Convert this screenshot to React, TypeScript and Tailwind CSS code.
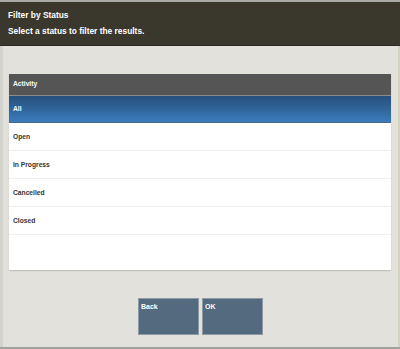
import React from "react";

const rows = ["Open", "In Progress", "Cancelled", "Closed"];

export default function App() {
  return (
    <div
      className="w-[400px] h-[349px] flex flex-col bg-[#e2e1dc] overflow-hidden relative"
      style={{ fontFamily: '"Liberation Sans", Arial, sans-serif' }}
    >
      <div className="h-[2px] bg-[#a9a9a6]" />
      <div className="h-[44px] bg-[#3a372c] border-b border-[#2c2a22] flex flex-col px-[8px] text-white font-bold text-[8.4px] leading-none">
        <div className="mt-[9px]">Filter by Status</div>
        <div className="mt-[8px]">Select a status to filter the results.</div>
      </div>
      <div className="flex-1 flex flex-col border-l-[3px] border-[#d3d2cd] border-r-[2px] border-r-[#d5d3bf]">
        <div className="mt-[28px] mx-[6px] mr-[7px] h-[196px] bg-white flex flex-col shadow-[0_1px_1px_rgba(0,0,0,0.15)] text-[6.7px] font-bold leading-none">
          <div className="h-[22px] shrink-0 bg-[#555555] border-b border-[#8a8a8a] flex items-center px-[4px] text-white">
            Activity
          </div>
          <div className="h-[27px] shrink-0 bg-gradient-to-b from-[#264f7a] to-[#3b7cbc] border-b border-[#4a6a8a] flex items-center px-[4px] text-white">
            All
          </div>
          {rows.map((r) => (
            <div
              key={r}
              className="h-[28px] shrink-0 border-b border-[#f0f0ee] flex items-center px-[4px] pt-[1px] text-[#333333]"
            >
              {r}
            </div>
          ))}
        </div>
        <div className="mt-[28px] flex justify-center gap-[3px]">
          <button className="w-[61px] h-[37px] bg-[#546a7e] border border-[#8e9aa5] text-white font-bold text-[7px] leading-none text-left flex items-start px-[2px] pt-[4px]">
            Back
          </button>
          <button className="w-[61px] h-[37px] bg-[#546a7e] border border-[#8e9aa5] text-white font-bold text-[7px] leading-none text-left flex items-start px-[2px] pt-[4px]">
            OK
          </button>
        </div>
      </div>
      <div className="h-[2px] bg-[#a0a09c]" />
    </div>
  );
}
